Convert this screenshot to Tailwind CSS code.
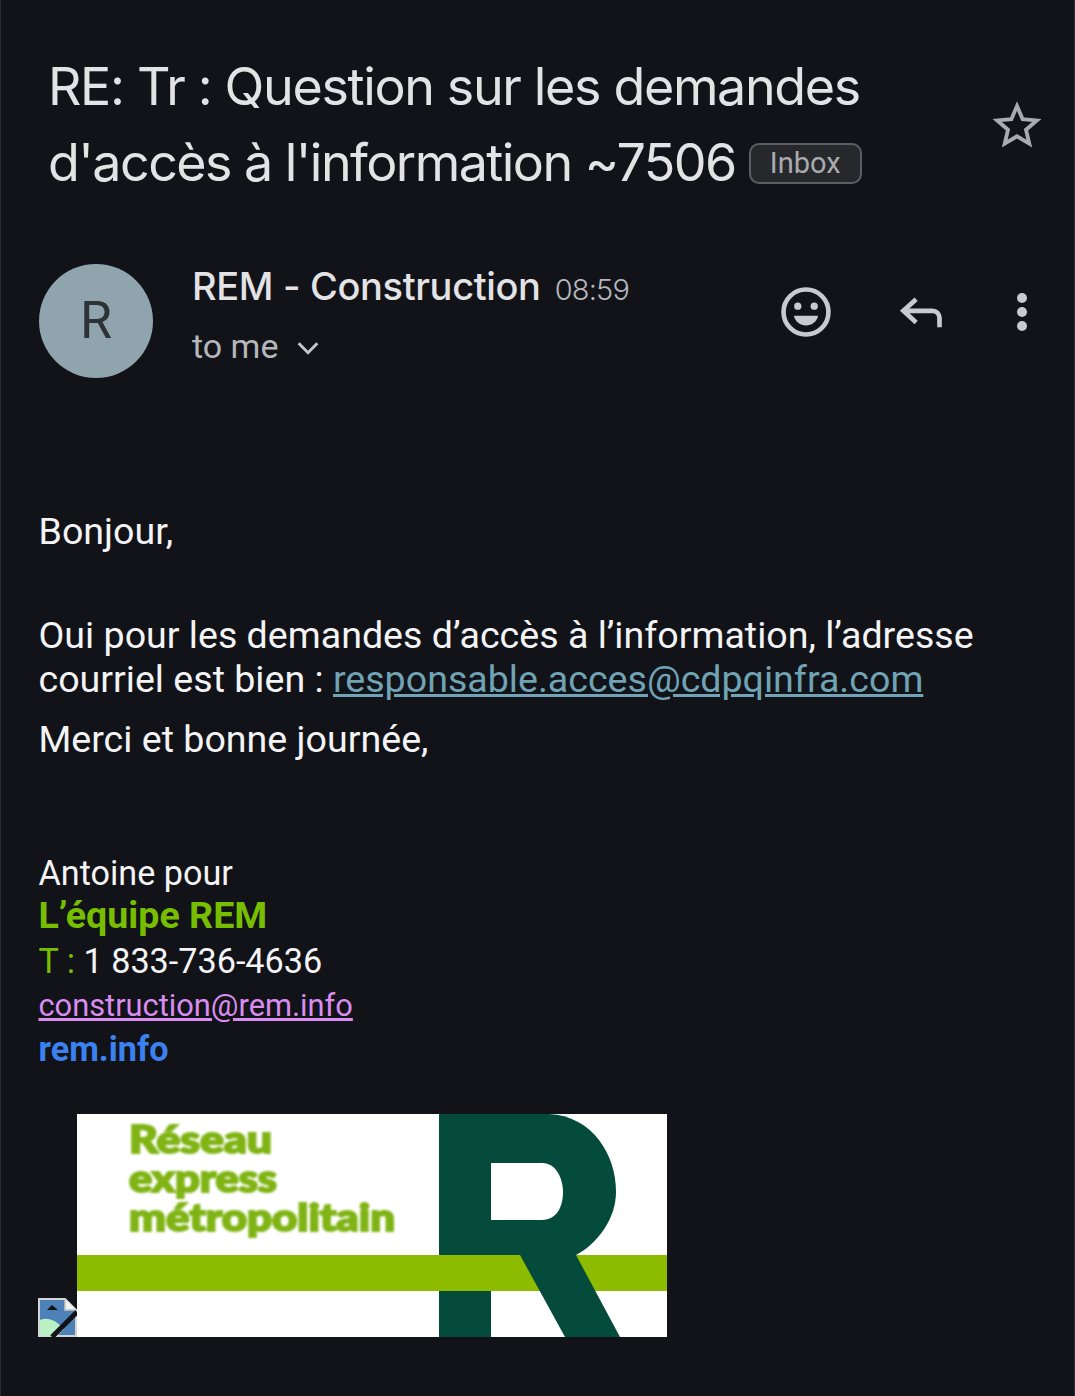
<!DOCTYPE html>
<html lang="fr">
<head>
<meta charset="UTF-8">
<meta name="viewport" content="width=device-width, initial-scale=1.0">
<title>RE: Tr : Question sur les demandes d'accès à l'information</title>
<script src="https://cdn.jsdelivr.net/npm/@tailwindcss/browser@4"></script>
</head>
<body>
<div class="h-[1396px] overflow-hidden bg-[#111318] border-x border-[#2a2c30] font-['Roboto',sans-serif]">

    <!-- subject -->
    <div class="flex items-center justify-between pt-[49px] pl-[47px] pr-[30px]">
        <h1 class="w-[880px] text-[52px] leading-[76px] font-normal text-[#e3e3e6] font-['Inter',sans-serif] tracking-[-1.45px] whitespace-nowrap">
            <div class="tracking-[-1.35px]">RE: Tr : Question sur les demandes</div>
            <div class="flex items-center tracking-[-1.55px]">d'accès à l'information ~7506
                <span class="ml-[13px] px-[19px] h-[41px] leading-[37px] text-[29px] tracking-normal font-['Roboto',sans-serif] text-[#a9abb0] bg-[#26282c] border-2 border-[#5c5e63] rounded-[10px]">Inbox</span>
            </div>
        </h1>
        <svg class="w-[54px] h-[54px]" viewBox="0 0 24 24" fill="none" stroke="#a9abb0" stroke-width="1.7"><path d="M12 3.600l2.500 5.800 6.300.55-4.800 4.150 1.450 6.150L12 17l-5.450 3.250L8 14.100 3.200 9.950l6.300-.55z"/></svg>
    </div>

    <!-- sender row -->
    <div class="flex mt-[63px] pl-[38px]">
        <div class="w-[114px] h-[114px] rounded-full bg-[#90a4ae] flex items-center justify-center text-[52px] text-[#2c3236]">R</div>
        <div class="ml-[39px] w-[530px]">
            <div class="flex items-baseline mt-[-3px]">
                <span class="text-[38px] leading-[50px] font-medium text-[#e3e3e6] font-['Inter',sans-serif] tracking-[-0.35px]">REM - Construction</span>
                <span class="ml-[14px] text-[29px] text-[#b5b7bb] font-['Inter',sans-serif] font-light tracking-[-0.8px]">08:59</span>
            </div>
            <div class="flex items-center mt-[14px] text-[34px] leading-[40px] text-[#b5b7bb]">
                to me
                <svg class="w-[32px] h-[32px] ml-[14px] mt-[4px]" viewBox="0 0 24 24" fill="none" stroke="#c4c6cb" stroke-width="2.200"><path d="M5 8.500l7 7 7-7"/></svg>
            </div>
        </div>
        <div class="flex items-center h-[96px] ml-[55px]">
            <svg class="w-[58px] h-[58px]" viewBox="0 0 24 24" fill="none"><circle cx="12" cy="12" r="9.300" stroke="#c8cad0" stroke-width="1.900"/><circle cx="8.600" cy="9.600" r="1.500" fill="#c8cad0"/><circle cx="15.400" cy="9.600" r="1.500" fill="#c8cad0"/><path d="M7 13.600h10c-.5 2.500-2.600 4-5 4s-4.500-1.500-5-4z" fill="#c8cad0"/></svg>
            <svg class="w-[56px] h-[56px] ml-[59px]" viewBox="0 0 24 24" fill="none" stroke="#c8cad0" stroke-width="2"><path d="M9.500 6.500L4 11.500l5.500 5M4 11.500h12.500a3 3 0 0 1 3 3V18.500"/></svg>
            <svg class="w-[12px] h-[40px] ml-[66px]" viewBox="0 0 12 40" fill="#c8cad0"><circle cx="6" cy="6" r="5"/><circle cx="6" cy="20" r="5"/><circle cx="6" cy="34" r="5"/></svg>
        </div>
    </div>

    <!-- message body -->
    <div class="pl-[37.5px] mt-[131px] text-[37.6px] leading-[44px] text-[#f4f4f6]">
        <p>Bonjour,</p>
        <p class="mt-[60px]">Oui pour les demandes d’accès à l’information, l’adresse<br>courriel est bien : <a href="#" class="text-[#6fa3b5] underline">responsable.acces@cdpqinfra.com</a></p>
        <p class="mt-[16px]">Merci et bonne journée,</p>

        <p class="mt-[90px] text-[34.2px]">Antoine pour</p>
        <p class="-mt-[2px] mb-[2px] font-bold text-[#78be00]">L’équipe REM</p>
        <p class="text-[34.2px]"><span class="text-[#78be00]">T : </span>1 833-736-4636</p>
        <p class="mt-px -mb-px text-[30.8px]"><a href="#" class="text-[#d98df0] underline">construction@rem.info</a></p>
        <p class="-mt-px mb-px text-[34.2px]"><a href="#" class="font-bold text-[#3b82f0]">rem.info</a></p>

        <!-- logo with broken image marker -->
        <div class="flex items-end mt-[43px] -ml-[0.5px]">
            <svg class="w-[39px] h-[39px]" viewBox="0 0 39 39"><path d="M1 1h26l11 11v26H1z" fill="#4d82b8" stroke="#d4d4d4" stroke-width="2"/><path d="M27 1v11h11" fill="#f0f0f0" stroke="#c4c4c4" stroke-width="1.500"/><path d="M9 12l5-5 6 5z" fill="#111318"/><path d="M2 38V22c8-4 18 2 24 9l-7 7z" fill="#b9f0c4"/><path d="M14 39L39 14" stroke="#111318" stroke-width="5"/></svg>
            <svg class="w-[590px] h-[223px] bg-white" viewBox="0 0 590 223">
                <g class="blur-[0.8px]" fill="#7fb414" stroke="#7fb414" stroke-width="2" font-family="Lato, sans-serif" font-weight="900" font-size="38">
                    <text x="52" y="39" textLength="143" lengthAdjust="spacingAndGlyphs">Réseau</text>
                    <text x="52" y="78" textLength="148" lengthAdjust="spacingAndGlyphs">express</text>
                    <text x="52" y="117" textLength="266" lengthAdjust="spacingAndGlyphs">métropolitain</text>
                </g>
                <path d="M362 0H472C515 2 539 40 539 78C539 105 520 130 499 141H362Z" fill="#054b3c"/>
                <path d="M414 49H465C480 49 486 66 486 78C486 92 480 106 465 106H414Z" fill="#fff"/>
                <rect x="0" y="141" width="590" height="36" fill="#8dbb00"/>
                <path d="M443 141H499L543 223H488Z" fill="#054b3c"/>
                <rect x="362" y="177" width="52" height="46" fill="#054b3c"/>
            </svg>
        </div>
    </div>
</div>
</body>
</html>
